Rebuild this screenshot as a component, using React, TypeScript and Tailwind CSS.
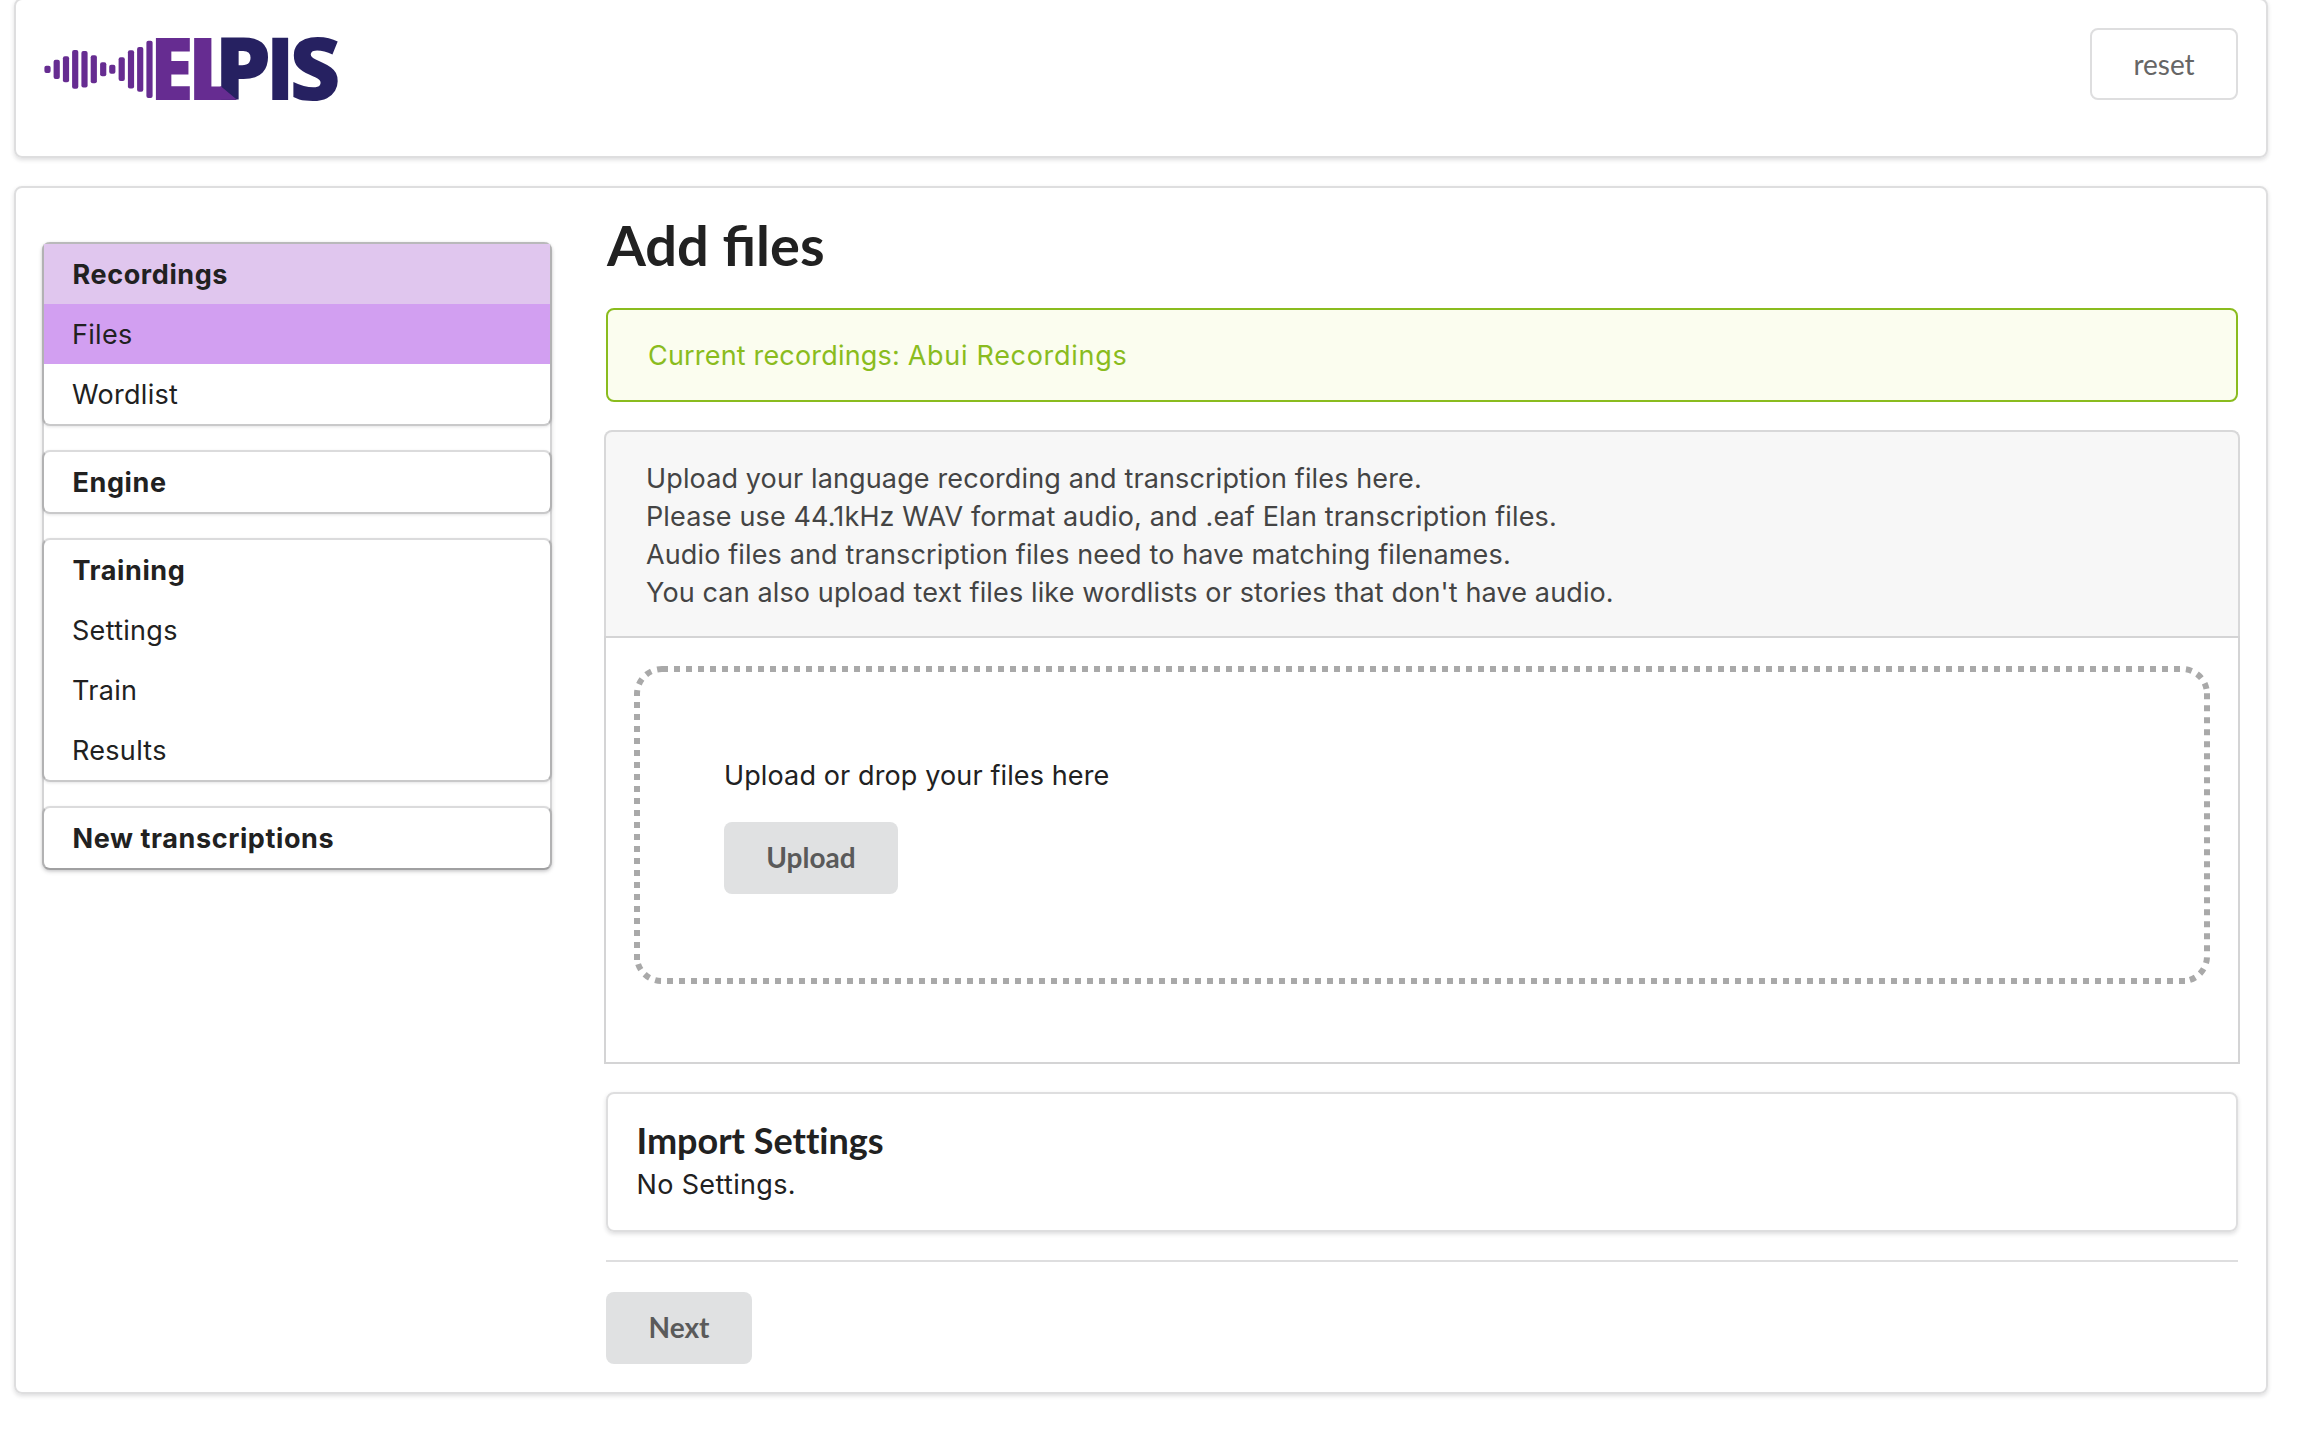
const waveBars: [number, number, number][] = [
  [47.5, 65.8, 73],
  [56.7, 59.8, 79],
  [66, 56.2, 82.3],
  [75.2, 50, 88.8],
  [84.5, 51, 87.6],
  [93.8, 55.2, 83.3],
  [103.2, 62.2, 76.3],
  [112.3, 64.8, 73.8],
  [121.7, 57.2, 81],
  [131, 50.2, 88.4],
  [140.2, 47, 91.7],
  [149.5, 40.7, 98],
];

const logoLetters = [
  { char: "E", x: 156, scale: 0.93, bearing: 6.6, fill: "#662c91" },
  { char: "L", x: 194, scale: 1.04, bearing: 6.6, fill: "#662c91" },
  { char: "P", x: 221.2, scale: 1.05, bearing: 6.6, fill: "#262161" },
  { char: "I", x: 272.3, scale: 0.95, bearing: 6.6, fill: "#262161" },
  { char: "S", x: 292.6, scale: 1.03, bearing: 3, fill: "#262161" },
];

function Logo() {
  return (
    <svg className="block h-[80px] w-[300px] overflow-visible" viewBox="42 28 300 80" role="img" aria-label="Elpis">
      {waveBars.map(([cx, top, bottom]) => (
        <rect key={cx} x={cx - 3.1} y={top} width="6.2" height={bottom - top} rx="2" fill="#662c91" />
      ))}
      {logoLetters.map((l) => (
        <text
          key={l.char}
          transform={`translate(${l.x - l.bearing * l.scale} 99.7) scale(${l.scale} 1)`}
          className="font-['Open_Sans',sans-serif] text-[86px] font-extrabold"
          fill={l.fill}
        >
          {l.char}
        </text>
      ))}
      <polygon points="220.5,86 237,99.7 220.5,99.7" fill="#662c91" />
    </svg>
  );
}

type Section = { title: string; active?: boolean; items: string[]; border: string };

const sections: Section[] = [
  {
    title: "Recordings",
    active: true,
    items: ["Files", "Wordlist"],
    border: "border-t-[#b9b9ba] border-b-[#c9c9ca]",
  },
  { title: "Engine", items: [], border: "border-t-[#dbdbdc] border-b-[#c9c9ca]" },
  {
    title: "Training",
    items: ["Settings", "Train", "Results"],
    border: "border-t-[#dbdbdc] border-b-[#c9c9ca]",
  },
  { title: "New transcriptions", items: [], border: "border-t-[#dbdbdc] border-b-[#a0a0a1]" },
];

function Sidebar() {
  return (
    <nav className="mt-[54px] ml-[26px] flex h-[628px] w-[510px] shrink-0 flex-col gap-6 rounded-lg border-x-2 border-[#d4d4d5] shadow-[0_2px_4px_rgba(34,36,38,0.15)]">
      {sections.map((s) => (
        <div
          key={s.title}
          className={`-mx-[2px] rounded-lg border-2 border-x-[#b2b2b3] bg-white shadow-[0_1px_3px_rgba(34,36,38,0.12)] ${s.border}`}
        >
          <div
            className={`flex h-[60px] items-center pt-[2px] pl-[28.5px] font-bold tracking-[0.6px] ${s.active ? "bg-[#e0c6ee]" : ""}`}
          >
            {s.title}
          </div>
          {s.items.map((item) => (
            <div
              key={item}
              className={`flex h-[60px] items-center pt-[2px] pl-7 tracking-[0.3px] ${item === "Files" ? "bg-[#d29ff1]" : ""}`}
            >
              {item}
            </div>
          ))}
        </div>
      ))}
    </nav>
  );
}

function DropZone() {
  return (
    <div className="relative h-[318px] w-[1576px] pt-[90px] pl-[90px]">
      <svg className="absolute inset-0 h-full w-full" viewBox="634 666 1576 318" fill="none">
        <path
          d="M662 669H2182A25 25 0 0 1 2206.5 689M2207 693.3V956A25 25 0 0 1 2188 980.5M2185 981H662A25 25 0 0 1 637.5 962M637 960V694A25 25 0 0 1 662 669"
          stroke="#a9a9a9"
          strokeWidth="6"
          strokeDasharray="6 6"
        />
      </svg>
      <p className="leading-[40px] tracking-[0.12px]">Upload or drop your files here</p>
      <button className="mt-[26px] flex h-[72px] w-[174px] items-center justify-center rounded-lg bg-[#e0e1e2] pb-[2px] font-['Lato',sans-serif] text-[28px] font-bold text-[#5a5a5a]">
        Upload
      </button>
    </div>
  );
}

const instructions = [
  "Upload your language recording and transcription files here.",
  "Please use 44.1kHz WAV format audio, and .eaf Elan transcription files.",
  "Audio files and transcription files need to have matching filenames.",
  "You can also upload text files like wordlists or stories that don't have audio.",
];

export default function App() {
  return (
    <div className="flow-root h-[1452px] overflow-hidden bg-white font-['Inter',sans-serif] text-[27px] text-[#212121]">
      <header className="-mt-[2px] ml-[14px] flex h-[160px] w-[2254px] items-start justify-between rounded-lg border-2 border-[#dededf] px-[26px] pt-[28px] pr-[28px] shadow-[0_2px_4px_rgba(34,36,38,0.15)]">
        <Logo />
        <button className="flex h-[72px] w-[148px] items-center justify-center rounded-lg border-2 border-[#dededf] pb-[1px] font-['Lato',sans-serif] text-[28px] text-[#666666]">
          reset
        </button>
      </header>

      <main className="mt-[28px] ml-[14px] flex h-[1208px] w-[2254px] items-start rounded-lg border-2 border-[#dededf] shadow-[0_2px_4px_rgba(34,36,38,0.15)]">
        <Sidebar />
        <div className="ml-[54px] w-[1632px] pt-[21px]">
          <h1 className="pl-px font-['Lato',sans-serif] text-[56px] leading-[72px] font-bold">Add files</h1>
          <div className="mt-[27px] flex h-[94px] items-center rounded-lg border-2 border-[#8abc1e] bg-[#fbfdef] pt-[3px] pl-[40px] text-[#8abc1e]">
            <p>
              <span className="tracking-[0.18px]">Current recordings: </span>
              <span className="tracking-[0.7px]">Abui Recordings</span>
            </p>
          </div>

          <div className="-mx-[2px] mt-[28px] h-[206px] rounded-t-lg border-2 border-b-0 border-[#d8d8d9] bg-[#f7f7f7] px-[40px] pt-[28px] leading-[38px] tracking-[0.13px] text-[#444444]">
            {instructions.map((line) => (
              <p key={line}>{line}</p>
            ))}
          </div>
          <div className="-mx-[2px] h-[428px] border-2 border-[#d4d4d5] p-[28px]">
            <DropZone />
          </div>

          <section className="mt-[28px] h-[140px] rounded-lg border-2 border-[#dededf] px-[28.5px] pt-[24px] shadow-[0_2px_4px_rgba(34,36,38,0.15)]">
            <h2 className="font-['Lato',sans-serif] text-[36px] leading-[44px] font-bold [font-variant-ligatures:none]">
              Import Settings
            </h2>
            <p className="pt-[3px] leading-[40px] tracking-[0.35px]">No Settings.</p>
          </section>

          <hr className="mt-[28px] border-t-2 border-[#dededf]" />
          <button className="mt-[30px] flex h-[72px] w-[146px] items-center justify-center rounded-lg bg-[#e0e1e2] pb-[2px] font-['Lato',sans-serif] text-[28px] font-bold text-[#5a5a5a]">
            Next
          </button>
        </div>
      </main>
    </div>
  );
}
